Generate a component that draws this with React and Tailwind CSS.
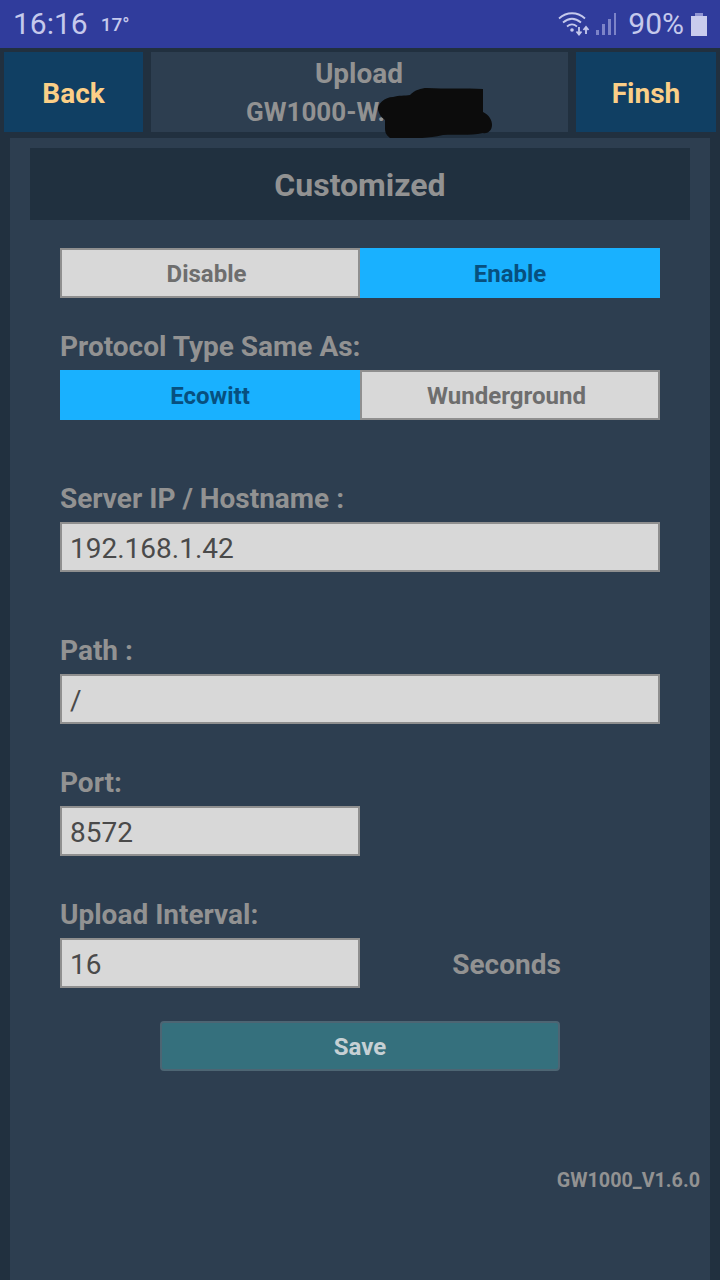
import React from 'react'

const WifiIcon = () => (
  <svg width="32" height="26" viewBox="0 0 32 26" fill="none" className="text-[#c5c9ec]">
    <path d="M1 7.5C9 0.5 19 0.5 27 7.5" stroke="currentColor" strokeWidth="1.8" />
    <path d="M5 11.5C11 6.5 17 6.5 23 11.5" stroke="currentColor" strokeWidth="1.8" />
    <path d="M9 15.5C12 13 16 13 19 15.5" stroke="currentColor" strokeWidth="1.8" />
    <circle cx="14" cy="19" r="1.8" fill="currentColor" />
    <path d="M21 16V23M18.5 20.5L21 23.5L23.5 20.5" stroke="currentColor" strokeWidth="1.8" />
    <path d="M28 23V16.5M25.5 19L28 16L30.5 19" stroke="currentColor" strokeWidth="1.8" />
  </svg>
)

const SignalIcon = () => (
  <svg width="22" height="24" viewBox="0 0 22 24" fill="#7d84c8">
    <rect x="0" y="18" width="3" height="5" />
    <rect x="6" y="12" width="3" height="11" />
    <rect x="12" y="7" width="3" height="16" />
    <rect x="18" y="1" width="2" height="22" />
  </svg>
)

const BatteryIcon = () => (
  <div className="flex flex-col items-center">
    <div className="w-2 h-[3px] bg-[#8f94d2]" />
    <div className="w-4 h-[20px] bg-[#c9cced]" />
  </div>
)

const Segment = ({ children, active, className }) => (
  <div
    className={
      active
        ? 'flex items-center justify-center h-[50px] pt-[1px] bg-[#19b1ff] text-[#07507f] text-[24px] font-bold ' + (className || '')
        : 'flex items-center justify-center h-[50px] pt-[2px] pr-[7px] bg-[#d8d8d8] border-2 border-[#8f8f8f] text-[#6e6e6e] text-[24px] font-bold ' + (className || '')
    }
  >
    {children}
  </div>
)

const Label = ({ children, className }) => (
  <div className={'h-[24px] leading-[24px] text-[28px] font-bold text-[#929292] ' + (className || '')}>{children}</div>
)

const Field = ({ value, className }) => (
  <div className={'flex items-center h-[50px] pt-[3px] pl-[8px] bg-[#d8d8d8] border-2 border-[#8f8f8f] text-[28px] text-[#4a4a4a] ' + (className || '')}>
    {value}
  </div>
)

export default function App() {
  return (
    <div className="w-[720px] h-[1280px] overflow-hidden bg-[#21303f] font-['Roboto',sans-serif]">
      {/* Status bar */}
      <div className="flex items-center justify-between h-[48px] pl-[13px] pr-[13px] bg-[#303c9c] text-[#c5c9ec]">
        <div className="flex items-center">
          <span className="text-[30px] leading-none">16:16</span>
          <span className="ml-[13px] text-[19px] font-medium leading-none">17°</span>
        </div>
        <div className="flex items-center">
          <WifiIcon />
          <div className="ml-[6px]"><SignalIcon /></div>
          <span className="ml-[10px] text-[30px] leading-none">90%</span>
          <div className="ml-[7px]"><BatteryIcon /></div>
        </div>
      </div>

      {/* Header */}
      <div className="flex justify-between h-[80px] mt-[4px] px-[4px]">
        <div className="flex items-center justify-center w-[139px] pt-[3px] bg-[#103f63] text-[#fbcf87] text-[28px] font-bold">Back</div>
        <div className="relative flex flex-col items-center w-[417px] bg-[#2d3e50] text-[#929292] font-bold">
          <div className="mt-[7px] pr-[1px] text-[28px] leading-[30px]">Upload</div>
          {/* the rest of the device name is blacked out in the picture */}
          <div className="mt-[10px] pr-[88px] text-[26px] leading-[26px]">GW1000-W.</div>
          <svg width="120" height="56" viewBox="0 0 120 56" className="absolute left-[226px] top-[36px]">
            <path
              d="M1 22C0 16 8 9 16 9C22 7 28 8 33 7C38 2 44 0 50 0C68 1 88 0 106 1V24C112 27 115 32 115 37C115 43 110 46 106 45C92 48 78 46 66 47C58 49 52 49 45 50C34 51 22 51 13 50C9 47 8 44 8 40V32C4 29 2 26 1 22Z"
              fill="#0c0c0c"
            />
          </svg>
        </div>
        <div className="flex items-center justify-center w-[140px] pt-[3px] bg-[#103f63] text-[#fbcf87] text-[28px] font-bold">Finsh</div>
      </div>

      {/* Panel */}
      <div className="relative h-[1142px] mt-[6px] mx-[10px] pt-[10px] px-[20px] bg-[#2d3e50]">
        <div className="flex items-center justify-center h-[72px] pt-[2px] bg-[#20303f] text-[#929292] text-[32px] font-bold">Customized</div>

        <div className="px-[30px]">
          <div className="flex mt-[28px]">
            <Segment className="w-[300px]">Disable</Segment>
            <Segment active className="w-[300px]">Enable</Segment>
          </div>

          <Label className="mt-[37px]">Protocol Type Same As:</Label>
          <div className="flex mt-[11px]">
            <Segment active className="w-[300px]">Ecowitt</Segment>
            <Segment className="w-[300px]">Wunderground</Segment>
          </div>

          <Label className="mt-[67px]">Server IP / Hostname :</Label>
          <Field value="192.168.1.42" className="mt-[11px]" />

          <Label className="mt-[67px]">Path :</Label>
          <Field value="/" className="mt-[11px]" />

          <Label className="mt-[47px]">Port:</Label>
          <Field value="8572" className="mt-[11px] w-[300px]" />

          <Label className="mt-[47px]">Upload Interval:</Label>
          <div className="flex items-center mt-[11px]">
            <Field value="16" className="w-[300px]" />
            <div className="w-[300px] pt-[3px] pr-[7px] text-center text-[28px] font-bold text-[#929292]">Seconds</div>
          </div>

          <div className="flex items-center justify-center w-[400px] h-[50px] mt-[33px] pt-[1px] mx-auto rounded-[4px] bg-[#35707d] border-2 border-[#4d6573] text-[#c6d0d4] text-[24px] font-bold">Save</div>

          <div className="mt-[98px] -mr-[40px] text-right text-[19.75px] leading-[24px] font-bold text-[#929292]">GW1000_V1.6.0</div>
        </div>
      </div>
    </div>
  )
}
